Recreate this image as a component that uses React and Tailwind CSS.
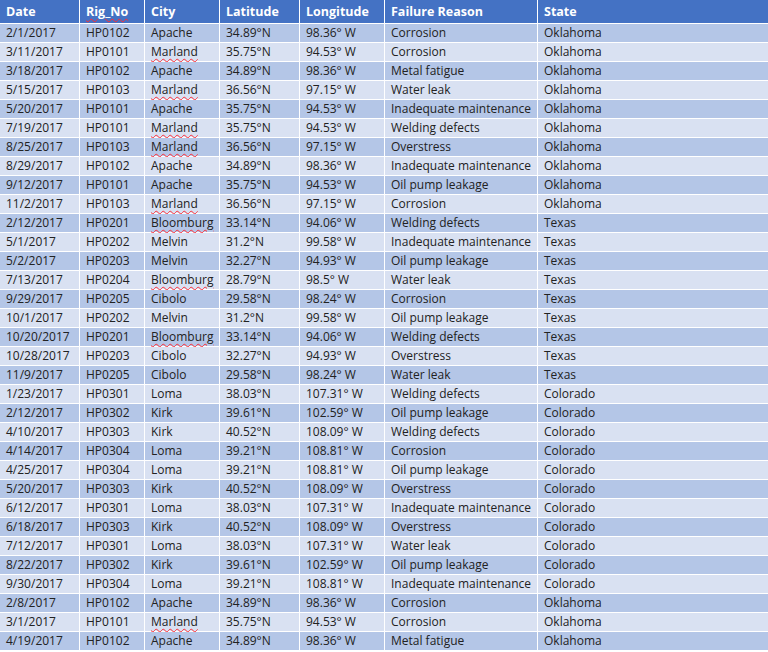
const rows = `2/1/2017|HP0102|Apache|34.89°N|98.36° W|Corrosion|Oklahoma
3/11/2017|HP0101|Marland|35.75°N|94.53° W|Corrosion|Oklahoma
3/18/2017|HP0102|Apache|34.89°N|98.36° W|Metal fatigue|Oklahoma
5/15/2017|HP0103|Marland|36.56°N|97.15° W|Water leak|Oklahoma
5/20/2017|HP0101|Apache|35.75°N|94.53° W|Inadequate maintenance|Oklahoma
7/19/2017|HP0101|Marland|35.75°N|94.53° W|Welding defects|Oklahoma
8/25/2017|HP0103|Marland|36.56°N|97.15° W|Overstress|Oklahoma
8/29/2017|HP0102|Apache|34.89°N|98.36° W|Inadequate maintenance|Oklahoma
9/12/2017|HP0101|Apache|35.75°N|94.53° W|Oil pump leakage|Oklahoma
11/2/2017|HP0103|Marland|36.56°N|97.15° W|Corrosion|Oklahoma
2/12/2017|HP0201|Bloomburg|33.14°N|94.06° W|Welding defects|Texas
5/1/2017|HP0202|Melvin|31.2°N|99.58° W|Inadequate maintenance|Texas
5/2/2017|HP0203|Melvin|32.27°N|94.93° W|Oil pump leakage|Texas
7/13/2017|HP0204|Bloomburg|28.79°N|98.5° W|Water leak|Texas
9/29/2017|HP0205|Cibolo|29.58°N|98.24° W|Corrosion|Texas
10/1/2017|HP0202|Melvin|31.2°N|99.58° W|Oil pump leakage|Texas
10/20/2017|HP0201|Bloomburg|33.14°N|94.06° W|Welding defects|Texas
10/28/2017|HP0203|Cibolo|32.27°N|94.93° W|Overstress|Texas
11/9/2017|HP0205|Cibolo|29.58°N|98.24° W|Water leak|Texas
1/23/2017|HP0301|Loma|38.03°N|107.31° W|Welding defects|Colorado
2/12/2017|HP0302|Kirk|39.61°N|102.59° W|Oil pump leakage|Colorado
4/10/2017|HP0303|Kirk|40.52°N|108.09° W|Welding defects|Colorado
4/14/2017|HP0304|Loma|39.21°N|108.81° W|Corrosion|Colorado
4/25/2017|HP0304|Loma|39.21°N|108.81° W|Oil pump leakage|Colorado
5/20/2017|HP0303|Kirk|40.52°N|108.09° W|Overstress|Colorado
6/12/2017|HP0301|Loma|38.03°N|107.31° W|Inadequate maintenance|Colorado
6/18/2017|HP0303|Kirk|40.52°N|108.09° W|Overstress|Colorado
7/12/2017|HP0301|Loma|38.03°N|107.31° W|Water leak|Colorado
8/22/2017|HP0302|Kirk|39.61°N|102.59° W|Oil pump leakage|Colorado
9/30/2017|HP0304|Loma|39.21°N|108.81° W|Inadequate maintenance|Colorado
2/8/2017|HP0102|Apache|34.89°N|98.36° W|Corrosion|Oklahoma
3/1/2017|HP0101|Marland|35.75°N|94.53° W|Corrosion|Oklahoma
4/19/2017|HP0102|Apache|34.89°N|98.36° W|Metal fatigue|Oklahoma`
  .split("\n")
  .map(r => r.split("|"));

const headers = ["Date", "Rig_No", "City", "Latitude", "Longitude", "Failure Reason", "State"];
const squiggle = ["Marland", "Bloomburg", "Rig_No"];

function Cell({ text }) {
  if (squiggle.includes(text)) {
    return <span className="underline decoration-wavy decoration-red-500 decoration-1 underline-offset-2">{text}</span>;
  }
  return text;
}

export default function App() {
  return (
    <div
      className="w-[768px] h-[652px] overflow-hidden bg-white"
      style={{ fontFamily: '"Open Sans", "Liberation Sans", sans-serif' }}
    >
      <div className="grid grid-cols-[79px_64px_74px_79px_84px_152px_1fr] gap-px bg-white">
        {headers.map(h => (
          <div key={h} className="h-[23px] bg-[#4472c4] text-white font-bold text-[12.5px] leading-[23px] px-[6px]">
            <Cell text={h} />
          </div>
        ))}
        {rows.map((r, i) =>
          r.map((c, j) => (
            <div
              key={i + "-" + j}
              className={
                "h-[18px] text-[12px] leading-[18px] px-[6px] text-[#222] whitespace-nowrap " +
                (i % 2 === 0 ? "bg-[#b4c6e7]" : "bg-[#d9e1f2]")
              }
            >
              <Cell text={c} />
            </div>
          ))
        )}
      </div>
    </div>
  );
}
